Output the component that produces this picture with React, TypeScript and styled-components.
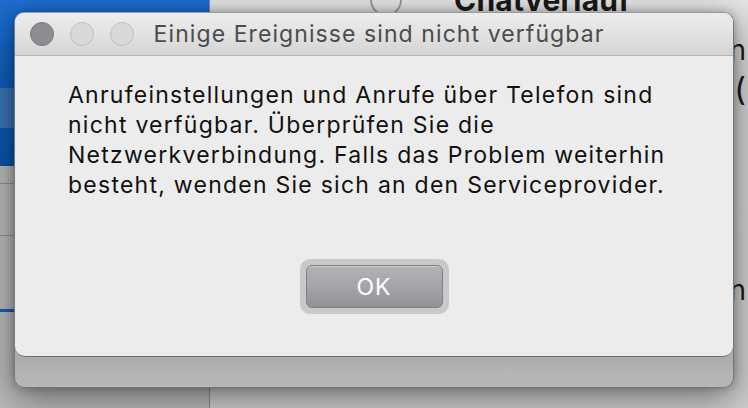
import React from "react";
import styled, { createGlobalStyle } from "styled-components";

const Global = createGlobalStyle`
  html, body { margin: 0; padding: 0; }
  body {
    width: 748px;
    height: 408px;
    overflow: hidden;
    background: #c4c4c4;
    font-family: Inter, "Noto Sans", "Liberation Sans", sans-serif;
  }
`;

const Desktop = styled.div`
  position: relative;
  width: 748px;
  height: 408px;
  overflow: hidden;
`;

/* ---------- background application (dimmed) ---------- */
const BackApp = styled.div`
  display: flex;
  width: 100%;
  height: 100%;
`;

const Sidebar = styled.div`
  width: 209px;
  flex: none;
  display: flex;
  flex-direction: column;
  background: #b9b9b9;
  border-right: 1px solid #8c8c8c;
`;

const BlueArea = styled.div`
  height: 166px;
  display: flex;
  flex-direction: column;
  background: linear-gradient(180deg, #1d6fd2 0%, #0f5fbb 45%, #0a55a8 100%);
`;

const BlueRow = styled.div<{ $h: number; $active?: boolean }>`
  height: ${(p) => p.$h}px;
  background: ${(p) => (p.$active ? "#3d74b6" : "transparent")};
`;

const ListRow = styled.div<{ $h: number; $line?: string }>`
  height: ${(p) => p.$h}px;
  border-bottom: ${(p) => (p.$line ? p.$line : "none")};
  flex: none;
`;

const Main = styled.div`
  flex: 1;
  display: flex;
  flex-direction: column;
  background: linear-gradient(180deg, #e4e4e4 0%, #d2d2d2 20%, #cdcdcd 100%);
`;

const MainHeader = styled.div`
  height: 40px;
  display: flex;
  align-items: flex-start;
  gap: 52px;
  padding-left: 160px;
`;

const RoundIcon = styled.div`
  width: 28px;
  height: 28px;
  margin-top: -16px;
  border: 2px solid #9a9a9a;
  border-radius: 50%;
  flex: none;
`;

const PageTitle = styled.div`
  margin-top: -18px;
  font-size: 30px;
  font-weight: 700;
  color: #1a1a1a;
  letter-spacing: 0.2px;
`;

const PeekRow = styled.div<{ $h: number }>`
  height: ${(p) => p.$h}px;
  display: flex;
  justify-content: flex-end;
  align-items: center;
  padding-right: 2px;
  font-size: 28px;
  color: #1a1a1a;
  line-height: 1;
`;

const PeekParen = styled.span`
  font-size: 32px;
`;

/* ---------- dialog (overlay) ---------- */
const Dialog = styled.div`
  position: absolute;
  left: 14px;
  top: 12px;
  width: 720px;
  height: 376px;
  box-sizing: border-box;
  border-radius: 10px;
  border: 1px solid #777;
  border-top-color: #9a9a9a;
  background: linear-gradient(180deg, #9d9d9d 0%, #a3a3a3 88%, #b4b4b4 96%, #b6b6b6 100%);
  box-shadow: 0 10px 36px rgba(0, 0, 0, 0.45), 0 0 8px rgba(0, 0, 0, 0.25);
  display: flex;
  flex-direction: column;
  overflow: hidden;
`;

const Panel = styled.div`
  height: 344px;
  display: flex;
  flex-direction: column;
  background: #ececec;
  border-radius: 0 0 10px 10px;
  border-bottom: 1px solid #6e6e6e;
  box-sizing: border-box;
`;

const TitleBar = styled.div`
  position: relative;
  height: 43px;
  flex: none;
  box-sizing: border-box;
  display: flex;
  align-items: center;
  justify-content: center;
  background: linear-gradient(180deg, #ececec 0%, #e2e2e2 50%, #d4d4d4 100%);
  border-bottom: 1px solid #b3b3b3;
`;

const Lights = styled.div`
  position: absolute;
  left: 15px;
  top: 9px;
  display: flex;
  gap: 16px;
`;

const Light = styled.div<{ $on?: boolean }>`
  width: 24px;
  height: 24px;
  box-sizing: border-box;
  border-radius: 50%;
  background: ${(p) => (p.$on ? "#8e8d91" : "#d9d9d9")};
  border: 1px solid ${(p) => (p.$on ? "#77767a" : "#bdbdbd")};
`;

const Title = styled.div`
  margin-left: 10px;
  font-size: 23px;
  color: #4b4b4b;
  letter-spacing: 1.08px;
`;

const Body = styled.div`
  flex: 1;
  display: flex;
  flex-direction: column;
  align-items: center;
  padding: 24px 0 0 53px;
  box-sizing: border-box;
`;

const Message = styled.p`
  align-self: stretch;
  margin: 0;
  font-size: 23px;
  line-height: 30px;
  color: #111;
  letter-spacing: 1.25px;
`;

const ButtonRing = styled.div`
  margin: 59px 0 0 -53px;
  padding: 6px;
  background: #c9c9c9;
  border-radius: 10px;
  display: flex;
`;

const OkButton = styled.button`
  width: 137px;
  height: 43px;
  box-sizing: border-box;
  border-radius: 6px;
  border: 1px solid #7f7e82;
  background: linear-gradient(180deg, #b3b2b6 0%, #a5a4a8 50%, #929195 100%);
  box-shadow: inset 0 1px 0 rgba(255, 255, 255, 0.35);
  color: #fff;
  font-family: inherit;
  font-size: 23px;
  letter-spacing: 1px;
  padding: 0;
  cursor: default;
`;

export default function App() {
  return (
    <Desktop>
      <Global />
      <BackApp>
        <Sidebar>
          <BlueArea>
            <BlueRow $h={88} />
            <BlueRow $h={40} $active />
            <BlueRow $h={38} />
          </BlueArea>
          <ListRow $h={17} $line="1px solid #8e8e8e" />
          <ListRow $h={51} $line="1px solid #8e8e8e" />
          <ListRow $h={73} $line="3px solid #1060c0" />
          <ListRow $h={60} />
        </Sidebar>
        <Main>
          <MainHeader>
            <RoundIcon />
            <PageTitle>Chatverlauf</PageTitle>
          </MainHeader>
          <PeekRow $h={20}>n</PeekRow>
          <PeekRow $h={60}>
            <PeekParen>(</PeekParen>
          </PeekRow>
          <PeekRow $h={155} />
          <PeekRow $h={30}>n</PeekRow>
        </Main>
      </BackApp>

      <Dialog>
        <Panel>
          <TitleBar>
            <Lights>
              <Light $on />
              <Light />
              <Light />
            </Lights>
            <Title>Einige Ereignisse sind nicht verfügbar</Title>
          </TitleBar>
          <Body>
            <Message>
              Anrufeinstellungen und Anrufe über Telefon sind
              <br />
              nicht verfügbar. Überprüfen Sie die
              <br />
              Netzwerkverbindung. Falls das Problem weiterhin
              <br />
              besteht, wenden Sie sich an den Serviceprovider.
            </Message>
            <ButtonRing>
              <OkButton>OK</OkButton>
            </ButtonRing>
          </Body>
        </Panel>
      </Dialog>
    </Desktop>
  );
}
